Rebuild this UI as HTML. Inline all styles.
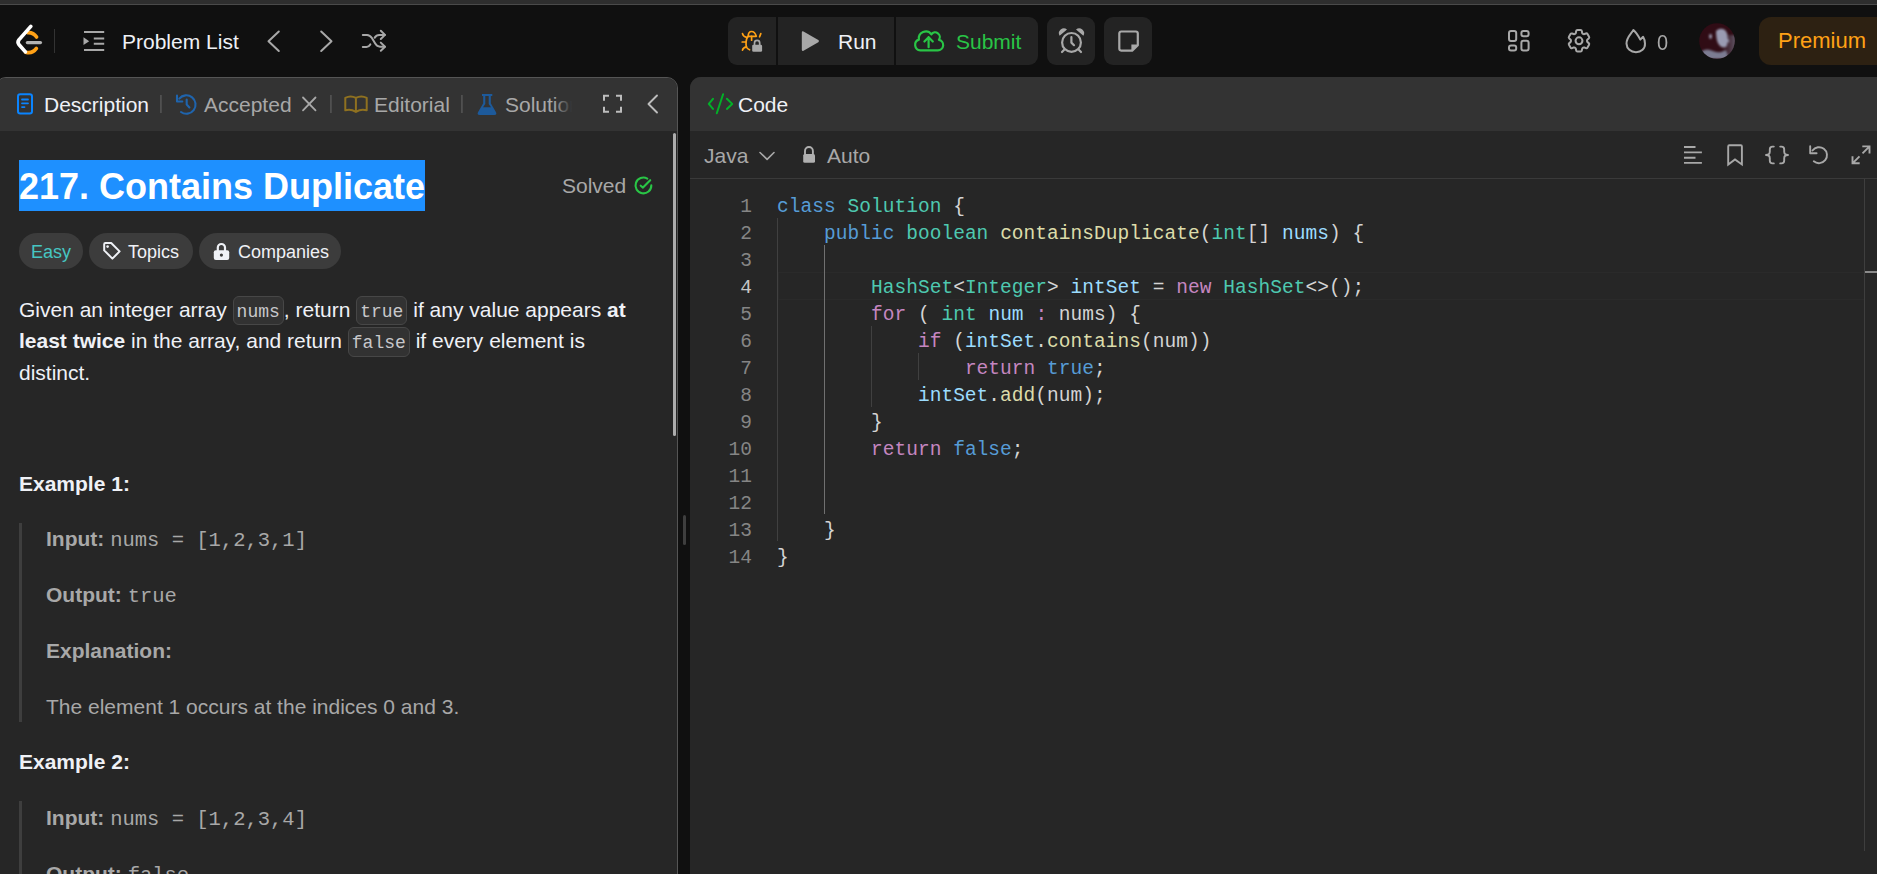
<!DOCTYPE html>
<html><head><meta charset="utf-8">
<style>
*{box-sizing:border-box;margin:0;padding:0}
html,body{width:1877px;height:874px;overflow:hidden;background:#101010;font-family:"Liberation Sans",sans-serif;color:#eff1f6}
.abs{position:absolute}
.t21{font-size:21px;line-height:23.46px;white-space:pre}
.mono{font-family:"Liberation Mono",monospace}
svg{position:absolute;overflow:visible}
#topstrip{position:absolute;left:0;top:0;width:1877px;height:4px;background:#2e2e2e}
#topline{position:absolute;left:0;top:4px;width:1877px;height:1px;background:#4a4a4a}
.btn{position:absolute;background:#232323}
#lp{position:absolute;left:-5px;top:77px;width:683px;height:820px;background:#262626;border:1px solid #555;border-radius:11px;overflow:hidden}
#lptabs{position:absolute;left:0;top:0;width:100%;height:53px;background:#333}
#rp{position:absolute;left:690px;top:77px;width:1200px;height:820px;background:#262626;border-radius:11px;overflow:hidden}
#rptabs{position:absolute;left:0;top:0;width:100%;height:54px;background:#333}
.pill{position:absolute;top:233px;height:36px;border-radius:18px;background:#3c3c3c}
.code{font-family:"Liberation Mono",monospace;font-size:19.5px;white-space:pre}
.ic{display:inline-block;font-family:"Liberation Mono",monospace;font-size:18px;line-height:21px;padding:4.8px 3px 1.5px;border:1px solid #474747;border-radius:6px;background:#323232;color:#c8c8cb;vertical-align:baseline}
b{font-weight:bold}
.ex{left:46px;color:#a8a8a8}
.em{font-family:"Liberation Mono",monospace;font-size:20.5px}
.ln{position:absolute;left:700px;width:52px;text-align:right;font-family:"Liberation Mono",monospace;font-size:19.5px;line-height:27px;color:#858585}
.cl{position:absolute;left:777px;font-family:"Liberation Mono",monospace;font-size:19.5px;line-height:27px;white-space:pre;color:#d4d4d4;letter-spacing:0.04px}
.k{color:#569cd6}.ty{color:#4ec9b0}.fn{color:#dcdcaa}.v{color:#9cdcfe}.kw{color:#c586c0}
</style></head><body>
<div id="topstrip"></div><div id="topline"></div>

<!-- NAV -->
<svg style="left:16px;top:25px" width="27" height="31" viewBox="0 0 27 31"></svg>
<div class="abs" style="left:54px;top:29px;width:1px;height:24px;background:#333"></div>
<div class="abs t21" style="left:122px;top:30px;color:#eff1f6">Problem List</div>

<div class="btn" style="left:728px;top:17px;width:310px;height:48px;border-radius:9px"></div>
<div class="abs" style="left:776px;top:17px;width:2px;height:48px;background:#101010"></div>
<div class="abs" style="left:894px;top:17px;width:2px;height:48px;background:#101010"></div>
<div class="abs t21" style="left:838px;top:30px;color:#eff1f6">Run</div>
<div class="abs t21" style="left:956px;top:30px;color:#29c546">Submit</div>
<div class="btn" style="left:1047px;top:17px;width:48px;height:48px;border-radius:9px"></div>
<div class="btn" style="left:1104px;top:17px;width:48px;height:48px;border-radius:9px"></div>

<div class="abs t21" style="left:1657px;top:30.5px;color:#a8a8a8;transform:scale(0.95,1.06);transform-origin:0 19px">0</div>
<svg style="left:1699px;top:23px" width="36" height="36" viewBox="0 0 36 36">
<defs><clipPath id="avc"><circle cx="18" cy="18" r="17.8"/></clipPath>
<linearGradient id="avr" x1="0" x2="1" y1="0" y2="0"><stop offset="0" stop-color="#6a6678" stop-opacity="0"/><stop offset="1" stop-color="#6a6678" stop-opacity="0.9"/></linearGradient>
<filter id="avb" x="-50%" y="-50%" width="200%" height="200%"><feGaussianBlur stdDeviation="1.1"/></filter></defs>
<g clip-path="url(#avc)">
<rect width="36" height="36" fill="#300c15"/>
<g filter="url(#avb)">
<rect x="24" y="12" width="14" height="26" fill="url(#avr)"/>
<path d="M17,8 Q21,4 26,7 Q29,10 28.5,15 L30.5,18.5 L28.5,19.5 Q28.5,23 26,24.5 Q22,25 19.5,21 Q17,17 17,8 Z" fill="#9a9bb2"/>
<path d="M3,28 Q8,25 14,28 Q19,30 22,29 L27,27 L30,36 L2,36 Z" fill="#7c7c92"/>
<ellipse cx="11.5" cy="13.5" rx="1.5" ry="2.4" fill="#9b9bb2"/>
</g>
</g>
</svg>
<div class="abs" style="left:1759px;top:17px;width:140px;height:48px;border-radius:12px;background:#2d2112"></div>
<div class="abs" style="left:1778px;top:29px;font-size:22px;line-height:24px;color:#ffa116;white-space:pre">Premium</div>

<!-- LEFT PANEL -->
<div id="lp">
  <div id="lptabs"></div>
</div>
<div class="abs t21" style="left:44px;top:93px;color:#eff1f6">Description</div>
<div class="abs t21" style="left:204px;top:93px;color:#a8a8a8">Accepted</div>
<div class="abs t21" style="left:374px;top:93px;color:#a8a8a8">Editorial</div>
<div class="abs t21" style="left:505px;top:93px;color:#a8a8a8">Solutions</div>

<div class="abs" style="left:19px;top:160px;width:406px;height:51px;background:#1e90ff"></div>
<div class="abs" style="left:19px;top:167px;font-size:36px;line-height:40px;font-weight:bold;color:#fff;white-space:pre">217. Contains Duplicate</div>
<div class="abs t21" style="left:562px;top:174px;color:#a8a8a8">Solved</div>

<div class="pill" style="left:19px;width:64px"></div>
<div class="pill" style="left:89px;width:104px"></div>
<div class="pill" style="left:199px;width:142px"></div>
<div class="abs" style="left:31px;top:242px;font-size:18px;line-height:20px;color:#46c6c2">Easy</div>
<div class="abs" style="left:128px;top:242px;font-size:18px;line-height:20px;color:#eff1f6">Topics</div>
<div class="abs" style="left:238px;top:242px;font-size:18px;line-height:20px;color:#eff1f6">Companies</div>


<div class="abs" style="left:19px;top:293.5px;width:640px;font-size:21px;line-height:31.2px;color:#eff1f6">Given an integer array <code class="ic">nums</code>, return <code class="ic">true</code> if any value appears <b>at least twice</b> in the array, and return <code class="ic">false</code> if every element is distinct.</div>

<div class="abs t21" style="left:19px;top:472px;font-weight:bold;color:#eff1f6">Example 1:</div>
<div class="abs" style="left:19px;top:523px;width:3px;height:199px;background:#3e3e3e"></div>
<div class="abs t21 ex" style="top:527px"><b>Input: </b><span class="em">nums = [1,2,3,1]</span></div>
<div class="abs t21 ex" style="top:583px"><b>Output: </b><span class="em">true</span></div>
<div class="abs t21 ex" style="top:639px"><b>Explanation:</b></div>
<div class="abs t21 ex" style="top:695px">The element 1 occurs at the indices 0 and 3.</div>
<div class="abs t21" style="left:19px;top:750px;font-weight:bold;color:#eff1f6">Example 2:</div>
<div class="abs" style="left:19px;top:801px;width:3px;height:80px;background:#3e3e3e"></div>
<div class="abs t21 ex" style="top:806px"><b>Input: </b><span class="em">nums = [1,2,3,4]</span></div>
<div class="abs t21 ex" style="top:862px"><b>Output: </b><span class="em">false</span></div>


<!-- solutions fade -->
<div class="abs" style="left:553px;top:80px;width:19px;height:48px;background:linear-gradient(90deg,rgba(51,51,51,0) 0%,rgba(51,51,51,1) 100%)"></div>
<div class="abs" style="left:572px;top:80px;width:24px;height:48px;background:#333"></div>
<!-- scrollbar -->
<div class="abs" style="left:673px;top:133px;width:3px;height:303px;border-radius:2px;background:#acacac"></div>
<!-- drag handle -->
<div class="abs" style="left:683px;top:515px;width:3px;height:30px;border-radius:2px;background:#3e3e3e"></div>

<!-- RIGHT PANEL -->
<div id="rp">
  <div id="rptabs"></div>
</div>
<div class="abs t21" style="left:738px;top:93px;color:#eff1f6">Code</div>
<div class="abs t21" style="left:704px;top:144px;color:#a8a8a8">Java</div>
<div class="abs t21" style="left:827px;top:144px;color:#a8a8a8">Auto</div>

<div class="abs" style="left:778px;top:272px;width:1087px;height:28px;border:1px solid #2a2a2a"></div>
<div class="abs" style="left:777px;top:218px;width:1px;height:323px;background:#404040"></div>
<div class="abs" style="left:824px;top:245px;width:1px;height:269px;background:#707070"></div>
<div class="abs" style="left:871px;top:326px;width:1px;height:81px;background:#404040"></div>
<div class="abs" style="left:918px;top:353px;width:1px;height:27px;background:#404040"></div>
<div class="ln" style="top:193.6px;color:#858585">1</div>
<div class="cl" style="top:193.6px"><span class="k">class</span> <span class="ty">Solution</span> {</div>
<div class="ln" style="top:220.6px;color:#858585">2</div>
<div class="cl" style="top:220.6px">    <span class="k">public</span> <span class="ty">boolean</span> <span class="fn">containsDuplicate</span>(<span class="ty">int</span>[] <span class="v">nums</span>) {</div>
<div class="ln" style="top:247.6px;color:#858585">3</div>
<div class="cl" style="top:247.6px"></div>
<div class="ln" style="top:274.6px;color:#c6c6c6">4</div>
<div class="cl" style="top:274.6px">        <span class="ty">HashSet</span>&lt;<span class="ty">Integer</span>&gt; <span class="v">intSet</span> = <span class="kw">new</span> <span class="ty">HashSet</span>&lt;&gt;();</div>
<div class="ln" style="top:301.6px;color:#858585">5</div>
<div class="cl" style="top:301.6px">        <span class="kw">for</span> ( <span class="ty">int</span> <span class="v">num</span> <span class="kw">:</span> nums) {</div>
<div class="ln" style="top:328.6px;color:#858585">6</div>
<div class="cl" style="top:328.6px">            <span class="kw">if</span> (<span class="v">intSet</span>.<span class="fn">contains</span>(num))</div>
<div class="ln" style="top:355.6px;color:#858585">7</div>
<div class="cl" style="top:355.6px">                <span class="kw">return</span> <span class="k">true</span>;</div>
<div class="ln" style="top:382.6px;color:#858585">8</div>
<div class="cl" style="top:382.6px">            <span class="v">intSet</span>.<span class="fn">add</span>(num);</div>
<div class="ln" style="top:409.6px;color:#858585">9</div>
<div class="cl" style="top:409.6px">        }</div>
<div class="ln" style="top:436.6px;color:#858585">10</div>
<div class="cl" style="top:436.6px">        <span class="kw">return</span> <span class="k">false</span>;</div>
<div class="ln" style="top:463.6px;color:#858585">11</div>
<div class="cl" style="top:463.6px"></div>
<div class="ln" style="top:490.6px;color:#858585">12</div>
<div class="cl" style="top:490.6px"></div>
<div class="ln" style="top:517.6px;color:#858585">13</div>
<div class="cl" style="top:517.6px">    }</div>
<div class="ln" style="top:544.6px;color:#858585">14</div>
<div class="cl" style="top:544.6px">}</div>
<div class="abs" style="left:690px;top:178px;width:1200px;height:1px;background:#3a3a3a"></div>
<div class="abs" style="left:1864px;top:179px;width:1px;height:672px;background:#3e3e3e"></div>
<div class="abs" style="left:1865px;top:271px;width:12px;height:2px;background:#8a8a8a"></div>

<svg id="icons" style="left:0;top:0;position:absolute" width="1877" height="874" viewBox="0 0 1877 874" fill="none" stroke-linecap="round" stroke-linejoin="round">
<!-- logo -->
<path d="M27.6,32.7 A10,10 0 0 1 36.6,37.1" stroke="#ffa116" stroke-width="3.6"/>
<path d="M25.6,52.2 A10,10 0 0 0 36.4,48.4" stroke="#ffa116" stroke-width="3.6"/>
<path d="M30.8,26.4 L18.9,39.9 Q17.2,42.2 18.9,44.5 L25.4,51.9" stroke="#fff" stroke-width="3.7"/>
<path d="M27.3,42.6 L40.5,42.6" stroke="#b3b3b3" stroke-width="3.1"/>
<!-- separator list icon -->
<g stroke="#a8a8a8" stroke-width="2" stroke-linecap="butt">
<path d="M84,32 H104.2 M93.8,38.4 H104.2 M93.8,43.8 H104.2 M84,50 H104.2"/>
</g>
<path d="M83.5,37.3 L89.2,41.2 L83.5,45.1 Z" fill="#a8a8a8"/>
<!-- chevrons -->
<path d="M278.8,31.5 L268.5,41.2 L278.8,51" stroke="#a8a8a8" stroke-width="2"/>
<path d="M321.2,31.5 L331.5,41.2 L321.2,51" stroke="#a8a8a8" stroke-width="2"/>
<!-- shuffle -->
<g stroke="#a8a8a8" stroke-width="2">
<path d="M362.8,34.9 H367 C369.4,34.9 370.6,36 371.9,38 L375.2,43.6 C376.5,45.8 377.7,46.7 380,46.7 H384.8"/>
<path d="M362.8,46.9 H366.5 C368.3,46.9 369.3,46.1 370.3,44.4"/>
<path d="M374.7,37.6 C375.9,35.7 377.1,34.9 379.2,34.9 H384.8"/>
<path d="M380.8,30.8 L385,34.9 L380.8,39 M380.8,42.6 L385,46.7 L380.8,50.8"/>
</g>
<!-- bug lock -->
<g stroke="#ffa116" stroke-width="1.7">
<path d="M748.2,36.3 C748.2,33 749.8,31.5 751.6,31.5 C753.6,31.5 755.3,33.2 756.3,36.3 Z"/>
<path d="M751.6,36.3 V40.2"/>
<path d="M748,36.5 C745.8,38.5 745.6,44.5 746.6,47.4 C747.3,48.6 748.3,49.3 749.6,49.8"/>
<path d="M742.5,33.7 C742.8,35.6 744,36.8 746.6,37.3"/>
<path d="M742.2,42 H745.6"/>
<path d="M742.5,50.2 C742.8,48.3 744,47.3 746.4,46.8"/>
<path d="M760.8,33.6 L759.6,36.8"/>
</g>
<path d="M754.5,45 V43 A2.6,2.6 0 0 1 759.7,43 V45" stroke="#a8a8a8" stroke-width="1.7"/>
<rect x="752.2" y="44.7" width="9.9" height="7.1" rx="1.3" fill="#a8a8a8"/>
<!-- play -->
<path d="M803.5,31.6 Q801.8,30.8 801.8,32.8 V49.6 Q801.8,51.6 803.5,50.8 L818.3,42.3 Q819.8,41.2 818.3,40.1 Z" fill="#a8a8a8"/>
<!-- cloud -->
<g stroke="#29c546" stroke-width="2.2">
<path d="M920.3,50.3 H937.8 A5.3,5.3 0 0 0 938.9,39.8 A4.6,4.6 0 0 0 931.4,34.3 A7,7 0 0 0 918.9,39.6 A5.5,5.5 0 0 0 920.3,50.3 Z"/>
<path d="M928.6,37.2 V47.2 M924.4,41.5 L928.6,37.2 L932.8,41.5"/>
</g>
<!-- clock -->
<g stroke="#a8a8a8" stroke-width="2.2">
<circle cx="1071.5" cy="42.4" r="9.4"/>
<path d="M1071.4,37.2 V42.6 L1074,45.2"/>
<path d="M1062,52 L1064.2,49.8 M1081,52 L1078.8,49.8"/>
</g>
<path d="M1059.6,35.8 A4.9,4.9 0 0 1 1067,29.6 Z M1083.4,35.8 A4.9,4.9 0 0 0 1076,29.6 Z" fill="#a8a8a8"/>
<!-- note -->
<path d="M1132.2,50.6 H1121.2 A2,2 0 0 1 1119.3,48.6 V33.4 A2,2 0 0 1 1121.3,31.5 H1135.8 A2,2 0 0 1 1137.8,33.5 V45.2 Z" stroke="#a8a8a8" stroke-width="2.2"/>
<path d="M1131.4,51.2 V44.6 H1138.4 Z" fill="#a8a8a8"/>
<!-- grid -->
<g stroke="#a8a8a8" stroke-width="2">
<rect x="1509" y="31" width="7.2" height="10" rx="2"/>
<rect x="1521.4" y="31" width="7.2" height="5.2" rx="2"/>
<rect x="1509" y="45.6" width="7.2" height="5" rx="2"/>
<rect x="1521.4" y="40.8" width="7.2" height="9.8" rx="2"/>
</g>
<!-- gear -->
<g transform="translate(1564.72,26.52) scale(1.19)" stroke="#a8a8a8" stroke-width="1.7">
<path d="M9.594 3.94c.09-.542.56-.94 1.11-.94h2.593c.55 0 1.02.398 1.11.94l.213 1.281c.063.374.313.686.645.87.074.04.147.083.22.127.325.196.72.257 1.075.124l1.217-.456a1.125 1.125 0 0 1 1.37.49l1.296 2.247a1.125 1.125 0 0 1-.26 1.431l-1.003.827c-.293.241-.438.613-.43.992a7.723 7.723 0 0 1 0 .255c-.008.378.137.75.43.991l1.004.827c.424.35.534.955.26 1.43l-1.298 2.247a1.125 1.125 0 0 1-1.369.491l-1.217-.456c-.355-.133-.75-.072-1.076.124a6.47 6.47 0 0 1-.22.128c-.331.183-.581.495-.644.869l-.213 1.281c-.09.543-.56.94-1.110.94h-2.594c-.55 0-1.019-.398-1.11-.94l-.213-1.281c-.062-.374-.312-.686-.644-.87a6.52 6.520 0 0 1-.22-.127c-.325-.196-.72-.257-1.076-.124l-1.217.456a1.125 1.125 0 0 1-1.369-.49l-1.297-2.247a1.125 1.125 0 0 1 .26-1.431l1.004-.827c.292-.24.437-.613.43-.991a6.932 6.932 0 0 1 0-.255c.007-.38-.138-.751-.43-.992l-1.004-.827a1.125 1.125 0 0 1-.26-1.430l1.297-2.247a1.125 1.125 0 0 1 1.370-.491l1.216.456c.356.133.751.072 1.076-.124.072-.044.146-.086.22-.128.332-.183.582-.495.644-.869l.214-1.280Z"/>
<circle cx="12" cy="12" r="2.9"/>
</g>
<!-- flame -->
<path d="M1633.4,30 C1630,35 1626.3,38 1626.5,43.6 C1626.7,48.7 1630.7,52.2 1636,52.2 C1641.3,52.2 1645.2,48.7 1645,43.6 C1644.9,40.8 1644.3,38.7 1643.1,36.8 L1640.3,39.6 C1638.4,36 1636.4,32.6 1633.4,30 Z" stroke="#a8a8a8" stroke-width="2"/>

<!-- tab icons -->
<rect x="18" y="94.3" width="14" height="19.2" rx="2.2" stroke="#0a84ff" stroke-width="2"/>
<path d="M22,99.5 H28 M22,103.3 H28 M22,107.1 H24.5" stroke="#0a84ff" stroke-width="1.8"/>
<rect x="160" y="95" width="1.8" height="18" fill="#505050"/>
<g stroke="#1f64ad" stroke-width="2.1">
<path d="M181,112 A9.2,9.2 0 1 0 179.3,98.6"/>
<path d="M177,95.6 V101.5 H182.3"/>
<path d="M186.7,99.6 V104.6 L189.4,107.4"/>
</g>
<path d="M303,97.5 L315.5,110.3 M315.5,97.5 L303,110.3" stroke="#a8a8a8" stroke-width="1.8"/>
<rect x="330" y="95" width="1.8" height="18" fill="#505050"/>
<path d="M345.3,97.9 Q350.6,95.1 355.9,97.9 Q361.2,95.1 366.7,97.9 V110.3 Q361.2,108.4 355.9,111.9 Q350.6,108.4 345.3,110.3 Z M355.9,97.9 V111.9" stroke="#8f7120" stroke-width="2"/>
<rect x="461" y="95" width="1.8" height="18" fill="#505050"/>
<path fill-rule="evenodd" fill="#1d5a9b" d="M482,93.9 H492.3 V96 H490.8 V103.3 L496,112.3 Q497.2,115 494.4,115 H479.6 Q476.8,115 478,112.3 L483.2,103.3 V96 H482 Z M485.3,96 V103.9 L483,107.3 H491 L488.7,103.9 V96 Z"/>
<path d="M609,95.8 H604 V100.8 M616,95.8 H621 V100.8 M604,106.8 V111.8 H609 M621,106.8 V111.8 H616" stroke="#bdbdbd" stroke-width="2" stroke-linecap="butt" stroke-linejoin="miter"/>
<path d="M657,95.5 L648.5,104 L657,112.5" stroke="#bdbdbd" stroke-width="1.9"/>
<!-- pills icons -->
<path d="M104.2,244.2 Q104.2,243 105.4,243 H111.2 L119.6,251.4 L112.4,258.6 L104.2,250.4 Z" stroke="#eff1f6" stroke-width="2"/>
<circle cx="107.6" cy="246.6" r="1.3" fill="#eff1f6"/>
<path d="M217.8,250.5 V247.6 A3.6,3.6 0 0 1 225,247.6 V250.5" stroke="#eff1f6" stroke-width="2.2"/>
<rect x="213.8" y="250.3" width="15.4" height="9.8" rx="2" fill="#eff1f6"/>
<circle cx="221.4" cy="255.1" r="1.6" fill="#3c3c3c"/>
<!-- solved check -->
<path d="M651.3,185.4 A7.9,7.9 0 1 1 647.3,178.6" stroke="#29c546" stroke-width="2.1"/>
<path d="M640.7,185.7 L643,187.6 L650.2,180.2" stroke="#29c546" stroke-width="2.1"/>
<!-- code icon -->
<path d="M713,98.8 L708.8,103.9 L713,108.9 M723.1,94.3 L716.8,113.2 M726.9,98.8 L732.2,103.9 L726.9,108.9" stroke="#02b128" stroke-width="2"/>
<!-- java chevron & lock -->
<path d="M760,152.5 L767.1,159.4 L774,152.5" stroke="#a8a8a8" stroke-width="1.6"/>
<path d="M805,154.5 V151 A3.95,3.95 0 0 1 812.9,151 V154.5" stroke="#b0b0b0" stroke-width="1.9"/>
<rect x="803.2" y="154" width="11.8" height="8.8" rx="1.6" fill="#b0b0b0"/>
<!-- editor toolbar -->
<g stroke="#a8a8a8" stroke-width="1.9" stroke-linecap="butt">
<path d="M1684,147 H1695.5 M1684,152.4 H1701.9 M1684,157.7 H1695.5 M1684,162.9 H1701.9"/>
</g>
<path d="M1728.2,164.5 V146.4 Q1728.2,145.3 1729.3,145.3 H1740.8 Q1741.9,145.3 1741.9,146.4 V164.5 L1735,159.5 Z" stroke="#a8a8a8" stroke-width="1.9" stroke-linejoin="miter"/>
<path d="M1773.8,146.6 H1772.5 Q1769.8,146.6 1769.8,149.4 V151.8 Q1769.8,155 1766,155 Q1769.8,155 1769.8,158.2 V160.6 Q1769.8,163.4 1772.5,163.4 H1773.8 M1780.2,146.6 H1781.5 Q1784.2,146.6 1784.2,149.4 V151.8 Q1784.2,155 1788,155 Q1784.2,155 1784.2,158.2 V160.6 Q1784.2,163.4 1781.5,163.4 H1780.2" stroke="#a8a8a8" stroke-width="1.9"/>
<g stroke="#a8a8a8" stroke-width="1.9">
<path d="M1813.8,161.3 A8,8 0 1 0 1812.5,150.5"/>
<path d="M1810.2,146.3 V153.2 H1816.6"/>
</g>
<g stroke="#a8a8a8" stroke-width="1.9" stroke-linecap="butt" stroke-linejoin="miter">
<path d="M1862.3,146.4 H1869.5 V153.6 M1869.5,146.4 L1862.5,153.4"/>
<path d="M1852.5,156.2 V163.3 H1859.7 M1852.5,163.3 L1859.5,156.3"/>
</g>
</svg>
</body></html>
